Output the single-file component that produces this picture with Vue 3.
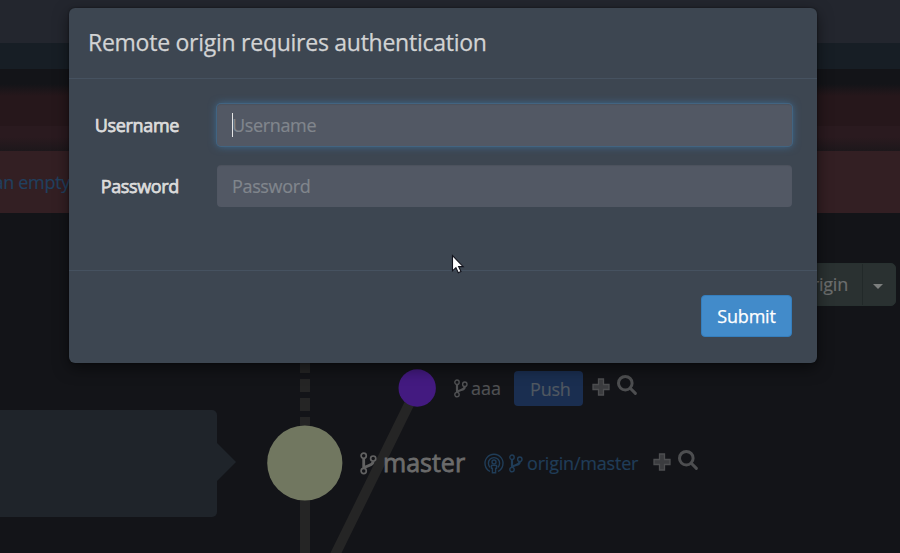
<script setup>
const fields = [
  { label: 'Username', focused: true },
  { label: 'Password', focused: false },
]
</script>

<template>
  <div class="page">
    <div class="topbar"></div>
    <div class="subbar"></div>
    <div class="alert-shade"></div>
    <div class="alert"><span class="alert-link">an empty</span></div>

    <main class="graph">
      <svg class="edges" width="900" height="340" viewBox="0 213 900 340">
        <path d="M305 430V350" stroke="#252525" stroke-width="10" stroke-dasharray="13 6" />
        <path d="M305 463V553M417 388L334 557" stroke="#252525" stroke-width="10" />
        <circle cx="417.2" cy="388" r="18.7" fill="#431a80" />
        <circle cx="304.8" cy="463" r="37.6" fill="#717760" />
        <path d="M217 443L236 462L217 481Z" fill="#1f242a" />
      </svg>
      <div class="commit"></div>

      <div class="fetch">
        <span class="fetch-label">origin</span>
        <span class="fetch-toggle"><i class="caret"></i></span>
      </div>

      <svg class="icon branch b-aaa" viewBox="0 0 14 19"><g fill="none" stroke="currentColor"><circle cx="3" cy="3.2" r="2.2" /><circle cx="3" cy="15.6" r="2.2" /><circle cx="10.8" cy="5.2" r="2.2" /><path class="limb" d="M3 5.5V13.5M10.8 7.6C10.7 11.4 6.2 10.4 3.4 12.9" /></g></svg>
      <span class="ref ref-aaa">aaa</span>
      <span class="push">Push</span>
      <svg class="icon plus p-aaa" viewBox="0 0 18 18"><path d="M6.5 1H11.5V6.5H17V11.5H11.5V17H6.5V11.5H1V6.5H6.5Z" /></svg>
      <svg class="icon search s-aaa" viewBox="0 0 20 20"><circle cx="8.3" cy="8.2" r="6.8" /><path d="M13.3 13.2L18.4 18.4" /></svg>

      <svg class="icon branch b-master" viewBox="0 0 17 23"><g fill="none" stroke="currentColor"><circle cx="3.7" cy="3.8" r="2.6" /><circle cx="3.7" cy="19" r="2.6" /><circle cx="13.2" cy="6.6" r="2.6" /><path class="limb" d="M3.7 6.6V16.4M13.2 9.5C13 14 7.5 12.8 4.2 15.8" /></g></svg>
      <span class="ref ref-master">master</span>
      <svg class="icon remote" viewBox="0 0 20 21"><g fill="none" stroke="currentColor" stroke-width="1.4"><path d="M6.1 18.4A9 9 0 1 1 13.9 18.4M6.3 14.4A5.6 5.6 0 1 1 13.7 14.4" /><circle cx="10" cy="9" r="2" /><path d="M7.5 12.4H12.5V15.4H11.6V19.8H8.4V15.4H7.5Z" /></g></svg>
      <svg class="icon branch b-origin" viewBox="0 0 14 19"><g fill="none" stroke="currentColor"><circle cx="3" cy="3.2" r="2.2" /><circle cx="3" cy="15.6" r="2.2" /><circle cx="10.8" cy="5.2" r="2.2" /><path class="limb" d="M3 5.5V13.5M10.8 7.6C10.7 11.4 6.2 10.4 3.4 12.9" /></g></svg>
      <span class="ref ref-origin">origin/master</span>
      <svg class="icon plus p-master" viewBox="0 0 18 18"><path d="M6.5 1H11.5V6.5H17V11.5H11.5V17H6.5V11.5H1V6.5H6.5Z" /></svg>
      <svg class="icon search s-master" viewBox="0 0 20 20"><circle cx="8.3" cy="8.2" r="6.8" /><path d="M13.3 13.2L18.4 18.4" /></svg>
    </main>

    <section class="modal">
      <header class="modal-header"><span class="title">Remote origin requires authentication</span></header>
      <div class="modal-body">
        <div v-for="f in fields" :key="f.label" class="row">
          <span class="label">{{ f.label }}</span>
          <div class="input" :class="{ focused: f.focused }">
            <i v-if="f.focused" class="text-caret"></i>
            <span class="placeholder">{{ f.label }}</span>
          </div>
        </div>
      </div>
      <footer class="modal-footer"><button class="submit">Submit</button></footer>
    </section>

    <svg class="pointer" width="14" height="22" viewBox="0 0 14 22"><path d="M1.5 1.5V16.8L4.9 13.7L7.3 18.8L10 17.6L7.6 12.6H12.2Z" fill="#fff" stroke="#12131c" stroke-width="1.1" /></svg>
  </div>
</template>

<style>
body { background: #131418; overflow: hidden; }
</style>

<style scoped>
.page { position: relative; width: 900px; height: 553px; overflow: hidden; background: #131418; font-family: "Open Sans", sans-serif; font-size: 18px; line-height: 26px; }
.page * { box-sizing: border-box; }
.topbar { height: 43px; background: #23262e; }
.subbar { height: 26px; background: #171e25; }
.alert-shade { height: 82px; background: linear-gradient(#131418 0, #131418 15px, #26171b 27px, #26171b 57px, #2a1a1f 57px, #2a1a1f 68px, #1d171b 82px); }
.alert { height: 62px; background: #331f23; padding-top: 18px; }
.alert-link { display: block; width: 70px; color: #21405f; white-space: nowrap; direction: rtl; letter-spacing: -0.3px; -webkit-text-stroke: 0.2px #21405f; }
.graph { position: relative; height: 340px; }
.edges { display: block; }
.commit { position: absolute; left: -10px; top: 197px; width: 227px; height: 107px; border-radius: 5px; background: #1f242a; }
.fetch { position: absolute; left: 740px; top: 50px; width: 156px; height: 43px; display: flex; border-radius: 5px; background: #2a3131; border: 1px solid #283130; color: #6c6e6e; }
.fetch-label { flex: 1; text-align: right; padding: 7px 14px 0 0; letter-spacing: -0.2px; -webkit-text-stroke: 0.2px #6c6e6e; }
.fetch-toggle { width: 33px; display: flex; align-items: center; justify-content: center; border-left: 1px solid #222929; }
.caret { border: 5px solid transparent; border-top-color: #7c7f7e; border-bottom: 0; margin: 4px 2px 0 0; }
.ref { position: absolute; white-space: nowrap; }
.ref-aaa { left: 471px; top: 162px; color: #505153; -webkit-text-stroke: 0.2px #505153; }
.ref-master { left: 383px; top: 234px; font-size: 25px; line-height: 30px; color: #6b6b6b; -webkit-text-stroke: 0.8px #6b6b6b; }
.ref-origin { left: 527px; top: 237px; color: #203d58; letter-spacing: -0.2px; -webkit-text-stroke: 0.2px #203d58; }
.push { position: absolute; left: 514px; top: 158px; width: 69px; height: 35px; padding: 5px 0 0 16px; border-radius: 4px; background: #1a2e50; color: #505861; letter-spacing: -0.2px; -webkit-text-stroke: 0.2px #505861; }
.icon { position: absolute; overflow: visible; }
.branch { color: #505153; stroke-width: 1.4; }
.limb { stroke-width: 2.2; }
.b-aaa { left: 454px; top: 166px; width: 14px; height: 19px; }
.b-master { left: 360px; top: 239px; width: 17px; height: 23px; color: #626262; stroke-width: 1.7; }
.b-master .limb { stroke-width: 2.8; }
.b-origin { left: 509px; top: 241px; width: 14px; height: 19px; color: #203d58; }
.remote { left: 484px; top: 240px; width: 20px; height: 21px; color: #203d58; }
.plus { width: 18px; height: 18px; fill: #3b3c3f; stroke: #4d4e50; stroke-width: 1.3; }
.p-aaa { left: 592px; top: 165px; }
.p-master { left: 653px; top: 240px; }
.search { width: 20px; height: 20px; fill: none; stroke: #4d4e50; stroke-width: 3; stroke-linecap: round; }
.s-aaa { left: 617px; top: 162px; }
.s-master { left: 678px; top: 237px; }

.modal { position: absolute; left: 69px; top: 8px; width: 748px; height: 355px; display: flex; flex-direction: column; border-radius: 6px; background: #3d4651; box-shadow: 0 5px 15px rgba(0, 0, 0, 0.5), 0 0 2px rgba(0, 0, 0, 0.5); }
.modal-header { height: 71px; border-bottom: 1px solid #465260; padding: 19px 0 0 19px; }
.title { display: block; color: #d2d3d4; font-size: 23px; line-height: 30px; white-space: nowrap; letter-spacing: -0.26px; -webkit-text-stroke: 0.25px #d2d3d4; }
.modal-body { height: 191px; padding: 25px 25px 0 0; display: flex; flex-direction: column; gap: 19px; }
.row { display: flex; align-items: center; height: 42px; }
.label { width: 110px; margin-right: 38px; text-align: right; color: #dcdcdc; letter-spacing: -0.35px; -webkit-text-stroke: 0.75px #dcdcdc; }
.input { position: relative; flex: 1; height: 42px; border-radius: 4px; background: #525864; padding: 8px 15px; box-shadow: inset 0 1px 1px rgba(0, 0, 0, 0.075); }
.input.focused { box-shadow: inset 0 1px 1px rgba(0, 0, 0, 0.075), 0 0 0 1px #426481, 0 0 8px #3e719c; }
.placeholder { color: #81868d; letter-spacing: -0.35px; -webkit-text-stroke: 0.2px #81868d; }
.text-caret { position: absolute; left: 15px; top: 9px; width: 1px; height: 24px; background: #e5e5e5; }
.modal-footer { height: 93px; border-top: 1px solid #465260; padding: 24px 25px 0 0; display: flex; justify-content: flex-end; }
.submit { width: 91px; height: 42px; padding: 0; border: 1px solid #357ebd; border-radius: 4px; background: #428bca; color: #fff; font: 18px/26px "Open Sans", sans-serif; letter-spacing: -0.2px; -webkit-text-stroke: 0.25px #fff; }
.pointer { position: absolute; left: 451px; top: 254px; }
</style>
